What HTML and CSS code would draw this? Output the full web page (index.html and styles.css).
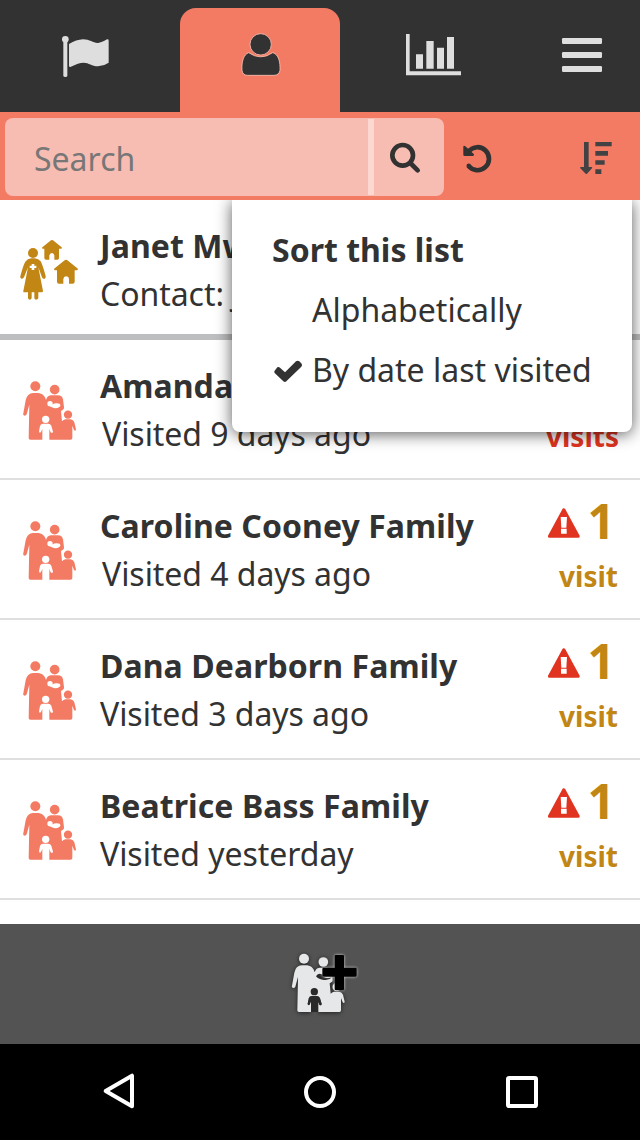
FILE: index.html
```html
<!DOCTYPE html>
<html lang="en">
<head>
<meta charset="utf-8">
<title>Contacts</title>
<link rel="stylesheet" href="styles.css">
</head>
<body>
<svg class="defs" width="0" height="0" aria-hidden="true">
  <defs>
    <g id="family">
      <circle cx="76" cy="49" r="15"/><circle cx="134" cy="59" r="14.5"/>
      <path d="M76 69H80C96 69 105 77 108 90C111 79 117 76 126 76H143C153 76 157 80 159 88L162 112Q163 117 158 120L153 123L156 154Q160 149 166 148H182Q190 149 193 157L198 178Q197 185 192 180L187 167V204Q187 209 182 209H118V177L122 187Q127 192 129 185L124 167Q121 161 115 161H99Q92 161 90 168L87 184Q88 191 93 186L97 176V209H61Q56 209 56 204L58 104L50 133Q46 140 40 135Q39 133 40 130L47 91Q51 70 70 69Z"/>
      <circle cx="174" cy="134" r="12.5"/>
    </g>
    <g id="baby"><circle cx="120" cy="101" r="8"/><path d="M125 104Q137 97 149 101Q154 105 149 110Q141 116 131 114Q121 111 116 105Z"/></g>
    <circle id="child-head" cx="107" cy="148" r="11"/>
    <g id="alert"><path d="M101 86Q104 86 106 89L149 168Q151 174 145 174H58Q52 174 54 168L97 89Q98 86 101 86Z"/><path fill="#fff" d="M92 112H111L109 144H94ZM93 147H110V162H93Z"/></g>
  </defs>
</svg>

<header class="header">
  <nav class="tabs">
    <a class="tab tab-flag"><svg width="180" height="112" viewBox="0 0 540 336"><circle cx="196" cy="118" r="10"/><path d="M190 120H202V228Q201 231 196 231Q191 231 190 228ZM207 132Q229 119 249 118C270 118 280 130 294 129Q305 128 321 118Q326 117 326 122V188Q312 198 294 199C275 199 267 188 251 188Q236 188 211 201Q207 201 207 198Z"/></svg></a>
    <a class="tab tab-active"><svg width="160" height="104" viewBox="540 24 480 312"><g fill="#323232" stroke="#fbc0b4" stroke-width="2.5"><path d="M746 158Q782 183 818 158C837 163 841 188 840 211Q837 226 822 226H743Q728 226 726 211C724 184 732 162 746 158Z"/><circle cx="782" cy="133" r="32"/></g></svg></a>
    <a class="tab"><svg width="180" height="112" viewBox="0 0 540 336"><path d="M198 102H209V214H363V226H198ZM228 163H249V206H228ZM259 123H281V206H259ZM291 143H312V206H291ZM321 111H342V206H321Z"/></svg></a>
    <a class="tab"><svg width="120" height="112" viewBox="540 0 360 336"><rect x="666" y="114" width="120" height="18" rx="4"/><rect x="666" y="156" width="120" height="18" rx="4"/><rect x="666" y="198" width="120" height="18" rx="4"/></svg></a>
  </nav>
  <div class="toolbar">
    <div class="search">
      <div class="search-field">Search</div>
      <div class="search-gap"></div>
      <div class="search-button"><svg width="70" height="76" viewBox="162 27 210 228" fill="none" stroke="#323232"><circle cx="248" cy="136" r="31" stroke-width="14"/><path d="M271 159L293 181" stroke-width="14" stroke-linecap="round"/></svg></div>
    </div>
    <svg class="reset" width="66" height="88" viewBox="372 6 198 264"><path d="M446 124A34.5 34.5 0 1 1 445 167" fill="none" stroke="#323232" stroke-width="14"/><path fill="#323232" d="M430 110Q431 105 436 109L462 133Q463 138 458 138H434Q430 138 430 134Z"/><circle cx="446" cy="167" r="6.5" fill="#323232"/></svg>
    <svg class="sort" width="130" height="88" viewBox="570 6 390 264" fill="#424245"><path d="M792 96H806V171H815Q818 172 816 175L801 191Q799 193 797 191L781 175Q779 172 782 171H792ZM826 96H875V109H826ZM826 123H864V137H826ZM826 151H854V164H826ZM826 178H844V192H826Z"/></svg>
  </div>
</header>

<main class="list">
  <section class="row row-primary">
    <svg class="avatar" viewBox="0 0 240 240" fill="#c28615"><circle cx="69" cy="69" r="15"/><path d="M64 85H74Q86 86 92 94Q97 102 107 138Q108 144 103 147Q98 147 96 142L85 112L99 183Q99 187 95 187H85V205Q83 209 78 209Q73 208 73 204V187H65V204Q64 209 59 209Q54 208 54 204V187H43Q39 187 40 183L54 112L42 142Q39 147 34 146Q30 144 31 139Q40 104 46 95Q52 86 64 85ZM123 31Q126 29 129 31L155 52Q157 55 153 56H147V84Q147 89 142 89H133V77Q132 69 126 69Q119 69 118 77V89H108Q103 89 103 84V56H98Q94 55 97 52ZM164 91Q168 88 172 91L202 115Q206 120 200 121H194V155Q194 161 188 161H177V147Q176 139 168 139Q161 139 160 147V161H147Q141 161 141 155V121H135Q130 119 134 115Z"/><path fill="#fff" d="M65 102H73V107H79V114H73V120H65V114H59V107H65Z"/></svg>
    <div class="details"><h2>Janet Mw</h2><p>Contact: J</p></div>
  </section>
  <section class="row">
    <svg class="avatar family" viewBox="0 0 240 240"><use href="#family"/><use class="cutout" href="#baby"/><use class="cutout" href="#child-head"/></svg>
    <div class="details inset"><h2>Amanda</h2><p>Visited 9 days ago</p></div>
    <div class="visits overdue"><div class="count"></div><span>visits</span></div>
  </section>
  <section class="row">
    <svg class="avatar family" viewBox="0 0 240 240"><use href="#family"/><use class="cutout" href="#baby"/><use class="cutout" href="#child-head"/></svg>
    <div class="details inset"><h2>Caroline Cooney Family</h2><p>Visited 4 days ago</p></div>
    <div class="visits"><div class="count"><svg class="alert" viewBox="51 82 102 96"><use href="#alert"/></svg><b>1</b></div><span>visit</span></div>
  </section>
  <section class="row">
    <svg class="avatar family" viewBox="0 0 240 240"><use href="#family"/><use class="cutout" href="#baby"/><use class="cutout" href="#child-head"/></svg>
    <div class="details"><h2>Dana Dearborn Family</h2><p>Visited 3 days ago</p></div>
    <div class="visits"><div class="count"><svg class="alert" viewBox="51 82 102 96"><use href="#alert"/></svg><b>1</b></div><span>visit</span></div>
  </section>
  <section class="row">
    <svg class="avatar family" viewBox="0 0 240 240"><use href="#family"/><use class="cutout" href="#baby"/><use class="cutout" href="#child-head"/></svg>
    <div class="details"><h2>Beatrice Bass Family</h2><p>Visited yesterday</p></div>
    <div class="visits"><div class="count"><svg class="alert" viewBox="51 82 102 96"><use href="#alert"/></svg><b>1</b></div><span>visit</span></div>
  </section>
  <div class="sort-menu">
    <h3>Sort this list</h3>
    <div class="option"><span class="mark"></span>Alphabetically</div>
    <div class="option"><svg class="mark" width="40" height="60" viewBox="156 450 120 180"><path fill="#323232" d="M164 542L172 532Q176 529 180 533L195 547L228 514Q233 510 238 514L245 521Q248 526 244 530L199 574Q195 578 190 574L164 549Q161 545 164 542Z"/></svg>By date last visited</div>
  </div>
</main>

<footer class="actions">
  <svg width="110" height="100" viewBox="0 0 330 300">
    <g class="add-family" transform="translate(26 37)"><use href="#family"/></g>
    <g fill="#292929"><circle cx="133" cy="185" r="11"/><path d="M126 199H141Q148 200 150 207L155 222Q154 228 149 225L145 216V246H123V214L119 224Q114 228 113 221L117 206Q120 199 126 199Z"/><path d="M138 139Q143 128 156 133L161 141Q171 147 186 142Q178 152 162 150Q146 149 138 139Z"/></g>
    <path class="plus" d="M198 75H219Q222 75 222 79V113H256Q260 113 260 117V136Q260 140 256 140H222V177Q222 181 218 181H198Q194 181 194 177V140H162Q157 140 157 136V117Q157 113 161 113H194V79Q194 75 198 75Z"/>
  </svg>
</footer>
<nav class="system-nav">
  <svg width="160" height="96" viewBox="0 12 480 288"><path d="M77 153L156 107V199Z"/></svg>
  <svg width="160" height="96" viewBox="480 12 480 288"><circle cx="720" cy="156" r="42"/></svg>
  <svg class="recent" width="160" height="96" viewBox="1086 12 480 288"><rect x="1284" y="114" width="84" height="84" rx="4"/></svg>
</nav>
</body>
</html>
```
FILE: styles.css
```css
* { box-sizing: border-box; }
body { margin: 0; width: 640px; height: 1140px; overflow: hidden; display: flex; flex-direction: column; background: #fff; color: #323232; font: 32px/48px "Noto Sans", sans-serif; }
h2, h3, p { margin: 0; font-size: 32px; }
h2 { letter-spacing: .07px; }
p { letter-spacing: -.05px; }
svg { display: block; flex: none; }
.defs { position: absolute; }
.header { position: relative; z-index: 2; background: #f47b63; }
.tabs { display: flex; align-items: flex-end; height: 112px; background: #323232; }
.tab { flex: none; fill: #dedede; }
.tab-active { height: 104px; background: #f47b63; border-radius: 16px 16px 0 0; }
.toolbar { display: flex; height: 88px; }
.search { display: flex; width: 439px; height: 78px; margin: 6px 0 0 5px; background: #f8bdb2; border-radius: 8px; flex: none; overflow: hidden; }
.search-field { width: 363px; padding: 17px 0 0 29px; color: #777; }
.search-gap { width: 6px; height: 76px; margin-top: 1px; background: #fcd8d1; }
.search-button { padding-top: 1px; }
.list { position: relative; height: 724px; flex: none; }
.row { display: flex; height: 140px; border-bottom: 2px solid #dfdfdf; }
.row-primary { border-bottom: 6px solid #bdbebf; }
.avatar { width: 80px; height: 80px; margin: 30px 10px 0; }
.family { fill: #f47b63; }
.cutout { fill: #fff; }
.details { padding-top: 22px; flex: 1; white-space: nowrap; }
.inset p { padding-left: 2px; }
.visits { width: 110px; padding: 10px 22px 0 0; text-align: right; color: #c28615; font-size: 28px; font-weight: 700; }
.overdue { padding-right: 21px; color: #e03420; }
.count { display: flex; justify-content: flex-end; height: 62px; padding-right: 3px; line-height: 62px; font-size: 48px; }
.count b { font-weight: 700; }
.alert { width: 34px; height: 32px; margin: 17px 7px 0 0; fill: #e03420; }
.sort-menu { position: absolute; top: 0; left: 232px; width: 400px; height: 232px; padding: 20px 40px; background: #fff; border-radius: 0 0 8px 8px; box-shadow: 0 2px 16px rgba(0, 0, 0, .65); line-height: 60px; }
.option { display: flex; white-space: nowrap; }
.mark { width: 40px; }
.actions { height: 120px; padding: 6px 0 0 270px; background: #535353; flex: none; }
.add-family { fill: #e6e7e8; filter: drop-shadow(0 2px 7px rgba(0, 0, 0, .65)); }
.plus { fill: #000; filter: drop-shadow(0 0 5px rgba(255, 255, 255, .75)); }
.system-nav { display: flex; height: 96px; padding-left: 80px; background: #000; flex: none; }
.system-nav svg { fill: none; stroke: #fff; stroke-width: 12; stroke-linejoin: round; }
.recent { margin-left: 42px; }
```
